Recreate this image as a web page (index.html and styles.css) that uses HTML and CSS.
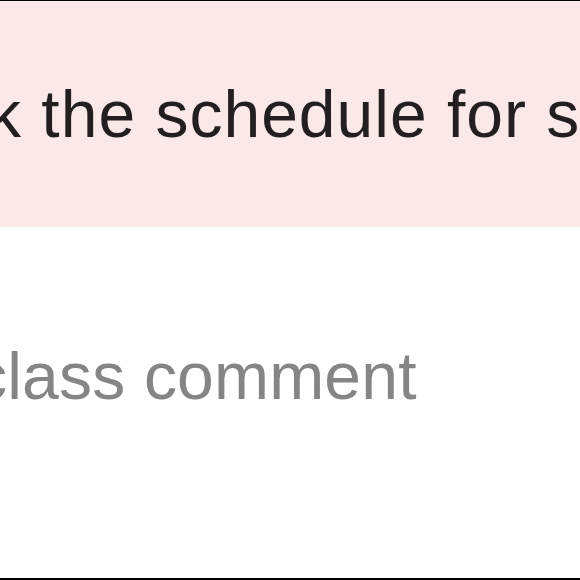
FILE: index.html
```html
<!DOCTYPE html>
<html>
<head>
<meta charset="utf-8">
<link rel="stylesheet" href="styles.css">
</head>
<body>
<div class="frame">
  <div class="message">
    <p class="message-text">k the schedule for s</p>
  </div>
  <div class="comment">
    <p class="comment-text">class comment</p>
  </div>
</div>
</body>
</html>
```

FILE: styles.css
```css
html, body {
  margin: 0;
  padding: 0;
  background: #ffffff;
}
.frame {
  width: 580px;
  height: 580px;
  box-sizing: border-box;
  border-top: 1px solid #000;
  border-bottom: 2px solid #000;
  display: flex;
  flex-direction: column;
  overflow: hidden;
  font-family: "Liberation Sans", Arial, sans-serif;
}
.message {
  height: 226px;
  background: #fbe8e9;
  display: flex;
  align-items: center;
  overflow: hidden;
}
.message-text {
  margin: 0 0 0 -12px;
  font-size: 66px;
  line-height: 1;
  letter-spacing: 1px;
  color: #231f20;
  white-space: nowrap;
}
.comment {
  flex: 1;
  overflow: hidden;
  padding-top: 116px;
}
.comment-text {
  margin: 0 0 0 -26px;
  font-size: 66px;
  line-height: 1;
  letter-spacing: 0.2px;
  color: #858585;
  white-space: nowrap;
}
```
